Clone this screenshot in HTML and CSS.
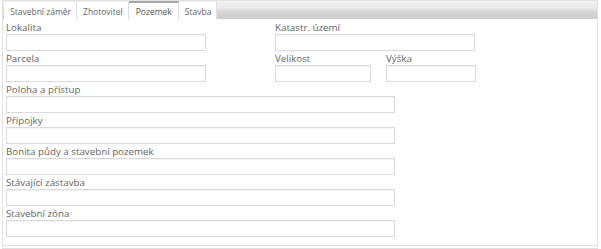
FILE: index.html
```html
<!DOCTYPE html>
<html lang="cs">
<head>
<meta charset="utf-8">
<link rel="stylesheet" href="styles.css">
</head>
<body>
<div class="wrap">
  <div class="tabs">
    <div class="tab">Stavební záměr</div>
    <div class="tab">Zhotovitel</div>
    <div class="tab active">Pozemek</div>
    <div class="tab">Stavba</div>
  </div>
  <div class="panel">
    <div class="row two">
      <div class="field w200"><label>Lokalita</label><div class="input"></div></div>
      <div class="field w200"><label>Katastr. území</label><div class="input"></div></div>
    </div>
    <div class="row two">
      <div class="field w200"><label>Parcela</label><div class="input"></div></div>
      <div class="pair">
        <div class="field w96"><label>Velikost</label><div class="input"></div></div>
        <div class="field w90"><label>Výška</label><div class="input"></div></div>
      </div>
    </div>
    <div class="field wide"><label>Poloha a přístup</label><div class="input"></div></div>
    <div class="field wide"><label>Přípojky</label><div class="input"></div></div>
    <div class="field wide"><label>Bonita půdy a stavební pozemek</label><div class="input"></div></div>
    <div class="field wide"><label>Stávající zástavba</label><div class="input"></div></div>
    <div class="field wide"><label>Stavební zóna</label><div class="input"></div></div>
  </div>
  <div class="footer-line"></div>
</div>
</body>
</html>
```
FILE: styles.css
```css
html, body {
  margin: 0;
  padding: 0;
  background: #fff;
}
body {
  font-family: "Open Sans", "DejaVu Sans", sans-serif;
  font-size: 9.75px;
  color: #666;
}
.wrap {
  padding: 0 3px 0 2px;
}
.tabs {
  display: flex;
  height: 19px;
  padding-left: 1px;
  background: linear-gradient(#f2f2f2 0%, #e8e8e8 40%, #d6d6d6 60%, #cdcdcd 100%);
  border: 1px solid #e2e2e2;
  border-bottom: none;
  box-sizing: border-box;
}
.tab {
  display: flex;
  align-items: center;
  padding: 0 5px 0 6px;
  height: 18px;
  margin-top: 1px;
  background: #fff;
  border-right: 1px solid #e0e0e0;
  font-size: 8.5px;
  color: #666;
}
.tab.active {
  border-top: 2px solid #a8a8a8;
  margin-top: 0;
  height: 17px;
  padding: 0 6px 0 7px;
  color: #555;
}
.panel {
  border: 1px solid #e2e2e2;
  border-top: none;
  padding: 2px 3px 7px 3px;
  height: 227px;
  box-sizing: border-box;
}
.row.two {
  display: flex;
  gap: 69px;
}
.pair {
  display: flex;
  gap: 15px;
}
.field label {
  display: block;
  height: 13px;
  line-height: 13px;
  white-space: nowrap;
}
.input {
  height: 17px;
  box-sizing: border-box;
  border: 1px solid #dadada;
  box-shadow: inset 0 1px 1px rgba(0,0,0,0.05);
  background: #fff;
  margin-bottom: 1px;
}
.w200 { width: 200px; }
.w96 { width: 96px; }
.w90 { width: 90px; }
.wide { width: 389px; }
.footer-line {
  height: 0;
  margin-top: 2px;
  border-top: 1px solid #e0e0e0;
}
```
